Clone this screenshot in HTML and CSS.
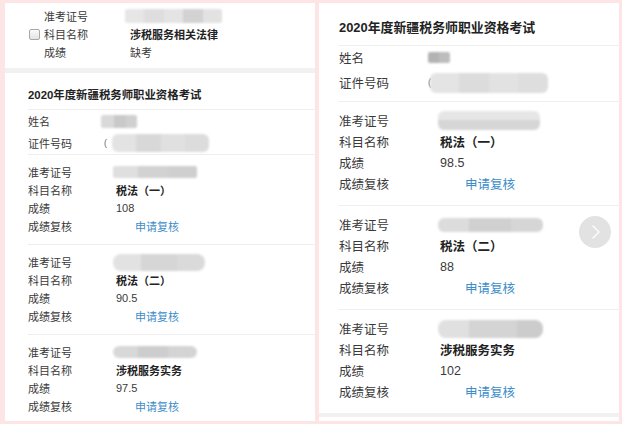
FILE: index.html
```html
<!DOCTYPE html>
<html lang="zh-CN">
<head>
<meta charset="utf-8">
<title>成绩查询</title>
<link rel="stylesheet" href="styles.css">
</head>
<body>
<div class="page">
  <div class="panel panel-left">
    <section class="tail">
      <div class="trow"><span></span><span class="label">准考证号</span><span class="value"><span class="blur b-lt"></span></span></div>
      <div class="trow"><span class="checkbox"></span><span class="label">科目名称</span><span class="value strong">涉税服务相关法律</span></div>
      <div class="trow"><span></span><span class="label">成绩</span><span class="value">缺考</span></div>
    </section>
    <div class="band"></div>
    <section class="card">
      <h2 class="title">2020年度新疆税务师职业资格考试</h2>
      <div class="info">
        <div class="row"><span class="label">姓名</span><span class="value"><span class="blur b-ln"></span></span></div>
        <div class="row"><span class="label">证件号码</span><span class="value"><span class="paren">(</span><span class="blur b-lid"></span></span></div>
      </div>
      <div class="group">
        <div class="row"><span class="label">准考证号</span><span class="value"><span class="blur b-l1"></span></span></div>
        <div class="row"><span class="label">科目名称</span><span class="value strong">税法（一）</span></div>
        <div class="row"><span class="label">成绩</span><span class="value">108</span></div>
        <div class="row"><span class="label">成绩复核</span><span class="value"><a class="link">申请复核</a></span></div>
      </div>
      <div class="group">
        <div class="row"><span class="label">准考证号</span><span class="value"><span class="blur b-l2"></span></span></div>
        <div class="row"><span class="label">科目名称</span><span class="value strong">税法（二）</span></div>
        <div class="row"><span class="label">成绩</span><span class="value">90.5</span></div>
        <div class="row"><span class="label">成绩复核</span><span class="value"><a class="link">申请复核</a></span></div>
      </div>
      <div class="group">
        <div class="row"><span class="label">准考证号</span><span class="value"><span class="blur b-l3"></span></span></div>
        <div class="row"><span class="label">科目名称</span><span class="value strong">涉税服务实务</span></div>
        <div class="row"><span class="label">成绩</span><span class="value">97.5</span></div>
        <div class="row"><span class="label">成绩复核</span><span class="value"><a class="link">申请复核</a></span></div>
      </div>
    </section>
  </div>

  <div class="panel panel-right">
    <section class="card">
      <h2 class="title">2020年度新疆税务师职业资格考试</h2>
      <div class="info">
        <div class="row"><span class="label">姓名</span><span class="value"><span class="blur b-rn"></span></span></div>
        <div class="row"><span class="label">证件号码</span><span class="value"><span class="paren">(</span><span class="blur b-rid"></span></span></div>
      </div>
      <div class="group">
        <div class="row"><span class="label">准考证号</span><span class="value"><span class="blur b-r1"></span></span></div>
        <div class="row"><span class="label">科目名称</span><span class="value strong">税法（一）</span></div>
        <div class="row"><span class="label">成绩</span><span class="value">98.5</span></div>
        <div class="row"><span class="label">成绩复核</span><span class="value"><a class="link">申请复核</a></span></div>
      </div>
      <div class="group">
        <div class="row"><span class="label">准考证号</span><span class="value"><span class="blur b-r2"></span></span></div>
        <div class="row"><span class="label">科目名称</span><span class="value strong">税法（二）</span></div>
        <div class="row"><span class="label">成绩</span><span class="value">88</span></div>
        <div class="row"><span class="label">成绩复核</span><span class="value"><a class="link">申请复核</a></span></div>
      </div>
      <div class="group">
        <div class="row"><span class="label">准考证号</span><span class="value"><span class="blur b-r3"></span></span></div>
        <div class="row"><span class="label">科目名称</span><span class="value strong">涉税服务实务</span></div>
        <div class="row"><span class="label">成绩</span><span class="value">102</span></div>
        <div class="row"><span class="label">成绩复核</span><span class="value"><a class="link">申请复核</a></span></div>
      </div>
    </section>
    <div class="band band-right"></div>
    <div class="next">
      <svg width="32" height="32" viewBox="0 0 32 32"><path d="M14 10 L20 16 L14 22" fill="none" stroke="#fff" stroke-width="1.3" stroke-linecap="round" stroke-linejoin="round"/></svg>
    </div>
  </div>
</div>
</body>
</html>
```
FILE: styles.css
```css
* { box-sizing: border-box; }
html, body { margin: 0; padding: 0; }
body {
  background: #fde5e5;
  font-family: "Liberation Sans", "Noto Sans CJK SC", sans-serif;
  color: #3a3a3a;
}
.page {
  display: flex;
  gap: 4px;
  padding: 3px 3px 3px 5px;
  height: 424px;
}
.panel {
  background: #fff;
  height: 418px;
  overflow: hidden;
  position: relative;
}
.panel-left { width: 310px; font-size: 11px; }
.panel-right { width: 300px; font-size: 12.5px; }

.title {
  margin: 0;
  font-weight: bold;
  color: #222;
  border-bottom: 1px solid #eeeeee;
  white-space: nowrap;
}
.row {
  display: grid;
  align-items: center;
}
.value { display: flex; align-items: center; }
.strong { font-weight: bold; color: #222; }
.link { color: #3d8dc9; text-decoration: none; }
.paren { color: #666; font-size: 0.8em; margin-right: -1px; }
.blur {
  display: inline-block;
  filter: blur(0.8px);
  border-radius: 2px;
}
.group { border-top: 1px solid #eeeeee; }
.band { background: #f1f1f1; }

/* Left panel */
.tail { padding: 4px 0 7px 24px; height: 65px; }
.trow {
  display: grid;
  grid-template-columns: 15px 86px 1fr;
  height: 18px;
  align-items: center;
}
.checkbox {
  width: 11px; height: 11px;
  border: 1px solid #a9a9a9;
  border-radius: 2px;
  background: linear-gradient(#fafafa, #e4e4e4);
}
.panel-left .band { height: 5px; }
.panel-left .card { padding-left: 23px; }
.panel-left .title { font-size: 11.4px; line-height: 16px; padding: 14px 0 6px; }
.panel-left .info .row { grid-template-columns: 76px 1fr; height: 22px; }
.panel-left .group { padding: 8px 0 9px; }
.panel-left .group .row { grid-template-columns: 88px 1fr; height: 18px; }
.panel-left .link { margin-left: 19px; }

.b-lt { width: 97px; height: 14px; margin-left: -5px;
  background: linear-gradient(90deg, #e6e6e6 0 20%, #dedede 20% 40%, #e4e4e4 40% 60%, #d2d2d2 60% 80%, #e2e2e2 80%); }
.b-ln { width: 36px; height: 13px; margin-left: -3px;
  background: linear-gradient(90deg, #d9d9d9 0 35%, #c9c9c9 35% 70%, #d0d0d0 70%); }
.b-lid { width: 97px; height: 18px; margin-left: 6px; border-radius: 6px;
  background: linear-gradient(90deg, #e3e3e3 0 25%, #d8d8d8 25% 50%, #e0e0e0 50% 75%, #dcdcdc 75%); }
.b-l1 { width: 84px; height: 12px; margin-left: -3px;
  background: linear-gradient(90deg, #dfdfdf 0 30%, #d2d2d2 30% 65%, #cfcfcf 65%); }
.b-l2 { width: 92px; height: 17px; margin-left: -3px; border-radius: 8px;
  background: linear-gradient(90deg, #e2e2e2 0 30%, #d6d6d6 30% 70%, #dadada 70%); }
.b-l3 { width: 84px; height: 12px; margin-left: -3px; border-radius: 6px;
  background: linear-gradient(90deg, #d8d8d8 0 30%, #cdcdcd 30% 65%, #d4d4d4 65%); }

/* Right panel */
.panel-right .card { padding-left: 20px; }
.panel-right .title { font-size: 12.9px; line-height: 18px; padding: 16px 0 8px; }
.panel-right .info { padding-bottom: 5px; }
.panel-right .info .row { grid-template-columns: 89px 1fr; height: 25px; }
.panel-right .info .row:first-child { height: 23px; }
.panel-right .info .row:last-child { height: 27px; }
.panel-right .group { padding: 8px 0 11px; }
.panel-right .group .row { grid-template-columns: 101px 1fr; height: 21px; }
.panel-right .link { margin-left: 25px; }
.band-right { height: 4px; }

.b-rn { width: 22px; height: 11px;
  background: linear-gradient(90deg, #b3b3b3 0 50%, #bdbdbd 50%); }
.b-rid { width: 118px; height: 20px; margin-left: 0; border-radius: 6px;
  background: linear-gradient(90deg, #e4e4e4 0 25%, #dcdcdc 25% 50%, #e2e2e2 50% 75%, #dedede 75%); }
.b-r1 { width: 102px; height: 19px; margin-left: -2px; border-radius: 6px;
  background: linear-gradient(#e6e6e6 0 45%, #d6d6d6 45%); }
.b-r2 { width: 105px; height: 14px; margin-left: -2px; border-radius: 6px;
  background: linear-gradient(90deg, #dcdcdc 0 30%, #d0d0d0 30% 70%, #d6d6d6 70%); }
.b-r3 { width: 105px; height: 18px; margin-left: -2px; border-radius: 8px;
  background: linear-gradient(90deg, #e0e0e0 0 30%, #d4d4d4 30% 75%, #cccccc 75%); }

.next {
  position: absolute;
  left: 260px;
  top: 213px;
  width: 32px; height: 32px;
  border-radius: 50%;
  background: #e2e2e2;
}
.next svg { display: block; }
```
